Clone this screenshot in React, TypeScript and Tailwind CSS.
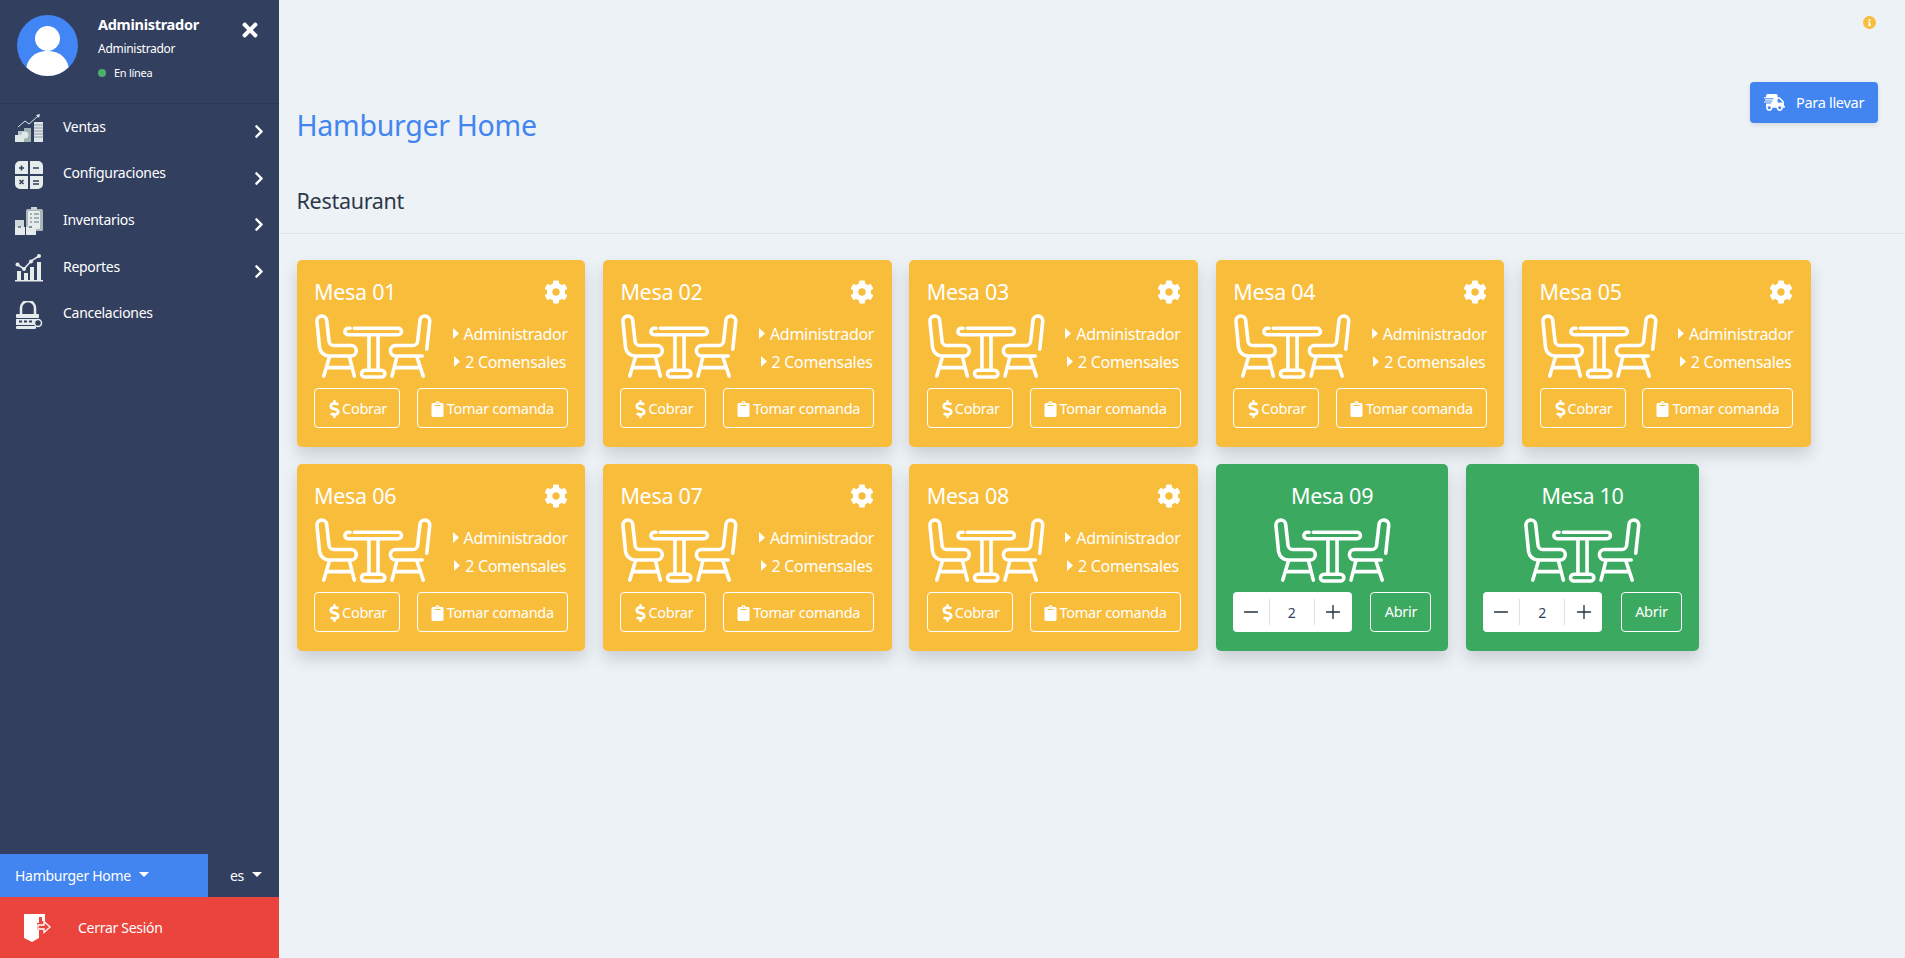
import { FaChevronRight, FaClipboard, FaCog, FaDollarSign, FaInfo, FaShippingFast, FaTimes } from 'react-icons/fa';
import { Minus, Plus } from 'lucide-react';

const font = { fontFamily: '"Noto Sans", sans-serif' };

const TableIcon = () => (
  <svg viewBox="42 42 364 200" className="w-[119px] h-[65px] block" fill="none" stroke="white" strokeWidth="11" strokeLinecap="round" strokeLinejoin="round">
    <path d="M50 65a15 15 0 0 1 30-3l7 62a15 15 0 0 0 15 15h53a16 16 0 0 1 0 32H88a30 30 0 0 1-30-26z" />
    <path d="M88 176L71 233M150 174l15 59M79 207h77" />
    <path d="M165 86h135a10 10 0 0 1 0 20H146a10 10 0 0 1 0-20h6" />
    <path d="M210 107v105M238 107v105" />
    <rect x="187" y="215" width="72" height="21" rx="10.500" />
    <path d="M388 150l9-85a15 15 0 0 0-30-3l-7 62a15 15 0 0 1-15 15h-53a16 16 0 0 0 0 32h82" />
    <path d="M358 176l19 57M296 174l-15 59M290 207h77" />
  </svg>
);

const VentasIcon = () => (
  <svg viewBox="0 0 28 28" className="w-[28px] h-[28px]">
    <path d="M3 13l7-6 4 3 9-8" fill="none" stroke="#dfe7e6" strokeWidth="1" />
    <path d="M25 0l-4 1 3 3z" fill="#dfe7e6" />
    <rect x="0" y="21" width="9" height="7" fill="#dfe7e6" />
    <rect x="3" y="17" width="6" height="4" fill="#b9c6c6" />
    <rect x="9" y="14" width="7" height="14" fill="#9fb0b0" />
    <circle cx="10" cy="21" r="3.500" fill="#dfe7e6" />
    <rect x="19" y="8" width="9" height="20" fill="#dfe7e6" />
    <path d="M19 11h9M19 14h9M19 17h9M19 20h9M19 23h9" stroke="#6f7d8c" strokeWidth="0.700" />
  </svg>
);

const ConfigIcon = () => (
  <svg viewBox="0 0 28 28" className="w-[28px] h-[28px]">
    <path d="M5 0h8v13H0V5a5 5 0 0 1 5-5zM15 0h8a5 5 0 0 1 5 5v8H15zM0 15h13v13H5a5 5 0 0 1-5-5zM15 15h13v8a5 5 0 0 1-5 5h-8z" fill="#e6ecec" />
    <path d="M4 7h5M6.500 4.500v5M18 7h6M4.500 19l4 4M8.500 19l-4 4M18 20h6M18 23h6" stroke="#333f5f" strokeWidth="1.600" />
  </svg>
);

const InventarioIcon = () => (
  <svg viewBox="0 0 28 28" className="w-[28px] h-[28px]">
    <rect x="11" y="2" width="17" height="22" rx="1.500" fill="#aab7b8" />
    <rect x="13" y="4" width="12" height="18" fill="#e6ecec" />
    <rect x="16" y="0" width="6" height="3" fill="#c8d2d2" />
    <path d="M15 7h2M19 7h5M15 11h2M19 11h5M15 15h2M19 15h5" stroke="#5f6e80" strokeWidth="1.200" />
    <rect x="0" y="13" width="9" height="8" fill="#cfd8d8" />
    <rect x="0" y="20" width="10" height="8" fill="#e6ecec" />
    <rect x="11" y="20" width="10" height="8" fill="#e6ecec" />
    <path d="M3 20h3M14 20h3" stroke="#5f6e80" strokeWidth="1.500" />
  </svg>
);

const ReportesIcon = () => (
  <svg viewBox="0 0 28 28" className="w-[28px] h-[28px]">
    <path d="M3 11l6 4 7-8 8-5" fill="none" stroke="#e6ecec" strokeWidth="1.600" />
    <circle cx="2.500" cy="10.500" r="2" fill="#e6ecec" />
    <circle cx="9" cy="15" r="2" fill="#e6ecec" />
    <circle cx="16" cy="7.500" r="2" fill="#e6ecec" />
    <circle cx="24" cy="2" r="2" fill="#e6ecec" />
    <path d="M2 17h4v9H2zM9 19h4v7H9zM15 13h4v13h-4zM22 8h4v18h-4z" fill="#e6ecec" />
    <rect x="0" y="26" width="28" height="1.500" fill="#e6ecec" />
  </svg>
);

const CandadoIcon = () => (
  <svg viewBox="0 0 28 28" className="w-[28px] h-[28px]">
    <path d="M6 13V7a7 7 0 0 1 14 0v6" fill="none" stroke="#e6ecec" strokeWidth="2.500" />
    <rect x="1" y="13" width="23" height="4" rx="1" fill="#e6ecec" />
    <rect x="1" y="18" width="21" height="6" fill="#e6ecec" />
    <path d="M4 20.500h3M9 20.500h3M14 20.500h3" stroke="#333f5f" strokeWidth="2" />
    <rect x="1" y="25" width="20" height="3" rx="1" fill="#e6ecec" />
    <circle cx="23" cy="22" r="3.500" fill="#333f5f" stroke="#e6ecec" strokeWidth="1.500" />
  </svg>
);

const CaretDown = () => (
  <svg viewBox="0 0 10 5" className="w-[10px] h-[5px] ml-[8px] -mt-[3px]" fill="white"><path d="M0 0h10L5 5z" /></svg>
);

const CaretRight = () => (
  <svg viewBox="0 0 6 11" className="w-[6px] h-[11px] mr-[5px]" fill="white"><path d="M0 0l6 5.500L0 11z" /></svg>
);

const menu = [
  { label: 'Ventas', icon: <VentasIcon />, arrow: true },
  { label: 'Configuraciones', icon: <ConfigIcon />, arrow: true },
  { label: 'Inventarios', icon: <InventarioIcon />, arrow: true },
  { label: 'Reportes', icon: <ReportesIcon />, arrow: true },
  { label: 'Cancelaciones', icon: <CandadoIcon />, arrow: false },
];

const Sidebar = () => (
  <aside className="w-[279px] h-[958px] shrink-0 bg-[#333f5f] flex flex-col text-white">
    <div className="h-[104px] shrink-0 border-b border-[#2d3855] flex items-start pl-[17px] pr-[18px] pt-[15px] relative">
      <div className="w-[61px] h-[61px] rounded-full bg-[#4285f4] overflow-hidden relative shrink-0">
        <div className="absolute left-[18px] top-[11px] w-[25px] h-[25px] rounded-full bg-white" />
        <div className="absolute left-[9px] top-[36px] w-[43px] h-[40px] rounded-full bg-white" />
      </div>
      <div className="ml-[20px] -mt-[2px]">
        <div className="text-[14.5px] leading-[22px] font-bold">Administrador</div>
        <div className="text-[12px] leading-[18px] mt-[5px]">Administrador</div>
        <div className="flex items-center text-[11px] leading-[18px] mt-[6px]">
          <span className="w-[8px] h-[8px] rounded-full bg-[#4caf6a] mr-[8px]" />
          En línea
        </div>
      </div>
      <FaTimes className="ml-auto mt-[4px] w-[22px] h-[22px]" />
    </div>
    <nav className="flex-1 pt-[1px]">
      {menu.map((item) => (
        <div key={item.label} className="h-[46.6px] flex items-center pl-[15px] pr-[14px]">
          <div className="w-[28px] shrink-0">{item.icon}</div>
          <span className="ml-[20px] text-[14px] -mt-[4px]">{item.label}</span>
          {item.arrow && <FaChevronRight className="ml-auto mt-[7px] w-[12px] h-[15px]" />}
        </div>
      ))}
    </nav>
    <div className="flex h-[43px] shrink-0 text-[14px]">
      <div className="w-[208px] bg-[#4285f0] flex items-center pl-[15px]">
        Hamburger Home
        <CaretDown />
      </div>
      <div className="flex-1 flex items-center pl-[22px]">
        es
        <CaretDown />
      </div>
    </div>
    <div className="h-[61px] shrink-0 bg-[#ea443d] flex items-center pl-[24px] text-[14px]">
      <svg viewBox="0 0 27 28" className="w-[27px] h-[28px]" fill="white">
        <path d="M0 0h15v9h-2v7h2v8l-7 4-8-4z" />
        <path d="M15 0h6v7h-3V3h-3z" />
        <path d="M14 11h6V7.500l6 5.500-6 5.500V15h-6z" fill="#ea443d" stroke="white" strokeWidth="1.300" />
      </svg>
      <span className="ml-[27px]">Cerrar Sesión</span>
    </div>
  </aside>
);

const MesaOcupada = ({ nombre }: { nombre: string }) => (
  <div className="w-[288.8px] h-[187px] bg-[#f9bd3c] rounded-[5px] shadow-[0_8px_16px_rgba(0,0,0,0.15)] px-[17.5px] pt-[17px] text-white flex flex-col">
    <div className="flex items-center justify-between h-[30px]">
      <span className="text-[21.5px]">{nombre}</span>
      <FaCog className="w-[24px] h-[24px]" />
    </div>
    <div className="flex items-center justify-between mt-[7px]">
      <TableIcon />
      <div className="flex flex-col items-center text-[16px] leading-[28px] mt-[2px]">
        <div className="flex items-center"><CaretRight />Administrador</div>
        <div className="flex items-center"><CaretRight />2 Comensales</div>
      </div>
    </div>
    <div className="flex justify-between mt-[9px] text-[14.5px]">
      <button className="w-[86px] h-[40px] border border-white rounded-[4px] flex items-center justify-center pt-[1px]">
        <FaDollarSign className="w-[15px] h-[18px]" />Cobrar
      </button>
      <button className="w-[151px] h-[40px] border border-white rounded-[4px] flex items-center justify-center pt-[1px]">
        <FaClipboard className="w-[13px] h-[16px] mr-[3px]" />Tomar comanda
      </button>
    </div>
  </div>
);

const MesaLibre = ({ nombre }: { nombre: string }) => (
  <div className="w-[232.8px] h-[187px] bg-[#3ba960] rounded-[5px] shadow-[0_8px_16px_rgba(0,0,0,0.15)] px-[17px] pt-[17px] text-white flex flex-col items-center">
    <div className="h-[30px] text-[21.5px] flex items-center">{nombre}</div>
    <div className="mt-[7px]"><TableIcon /></div>
    <div className="flex justify-between w-full mt-[9px]">
      <div className="w-[119px] h-[40px] bg-white rounded-[4px] flex items-center text-[#333f5f]">
        <div className="w-[36px] flex justify-center"><Minus size={22} strokeWidth={1.5} className="text-[#27323f]" /></div>
        <div className="w-[46px] h-[26px] border-x border-[#dde1e5] flex items-center justify-center text-[14px]">2</div>
        <div className="flex-1 flex justify-center"><Plus size={22} strokeWidth={1.5} className="text-[#27323f]" /></div>
      </div>
      <button className="w-[61px] h-[40px] border border-white rounded-[4px] text-[14.5px]">Abrir</button>
    </div>
  </div>
);

const App = () => (
  <div className="flex w-[1905px] h-[958px] overflow-hidden bg-[#edf2f7] text-[#333f5f] tracking-[-0.018em]" style={font}>
    <Sidebar />
    <main className="flex-1 min-w-0">
      <div className="flex justify-end pt-[16px] pr-[29px]">
        <div className="w-[13px] h-[13px] rounded-full bg-[#f9bd3c] flex items-center justify-center">
          <FaInfo className="w-[7px] h-[7px] text-white" />
        </div>
      </div>
      <div className="flex justify-between items-start pl-[17.5px] pr-[27px] mt-[53px]">
        <h1 className="text-[28.5px] text-[#4285f0] mt-[21px] leading-[44px]">Hamburger Home</h1>
        <button className="w-[128px] h-[41px] rounded-[4px] bg-[#4285f0] text-white text-[14.5px] flex items-center justify-center shadow-[0_2px_5px_rgba(0,0,0,0.1)]">
          <FaShippingFast className="w-[21px] h-[17px] mr-[11px]" />Para llevar
        </button>
      </div>
      <div className="border-b border-[#dfe3e8] pl-[17.5px] h-[87px] pt-[38px]">
        <h2 className="text-[21.5px] leading-[32px] text-[#2d3748]">Restaurant</h2>
      </div>
      <div className="flex flex-wrap gap-x-[17.6px] gap-y-[17px] pl-[17.5px] pt-[26px]">
        {['Mesa 01', 'Mesa 02', 'Mesa 03', 'Mesa 04', 'Mesa 05', 'Mesa 06', 'Mesa 07', 'Mesa 08'].map((m) => (
          <MesaOcupada key={m} nombre={m} />
        ))}
        <MesaLibre nombre="Mesa 09" />
        <MesaLibre nombre="Mesa 10" />
      </div>
    </main>
  </div>
);

export default App;
